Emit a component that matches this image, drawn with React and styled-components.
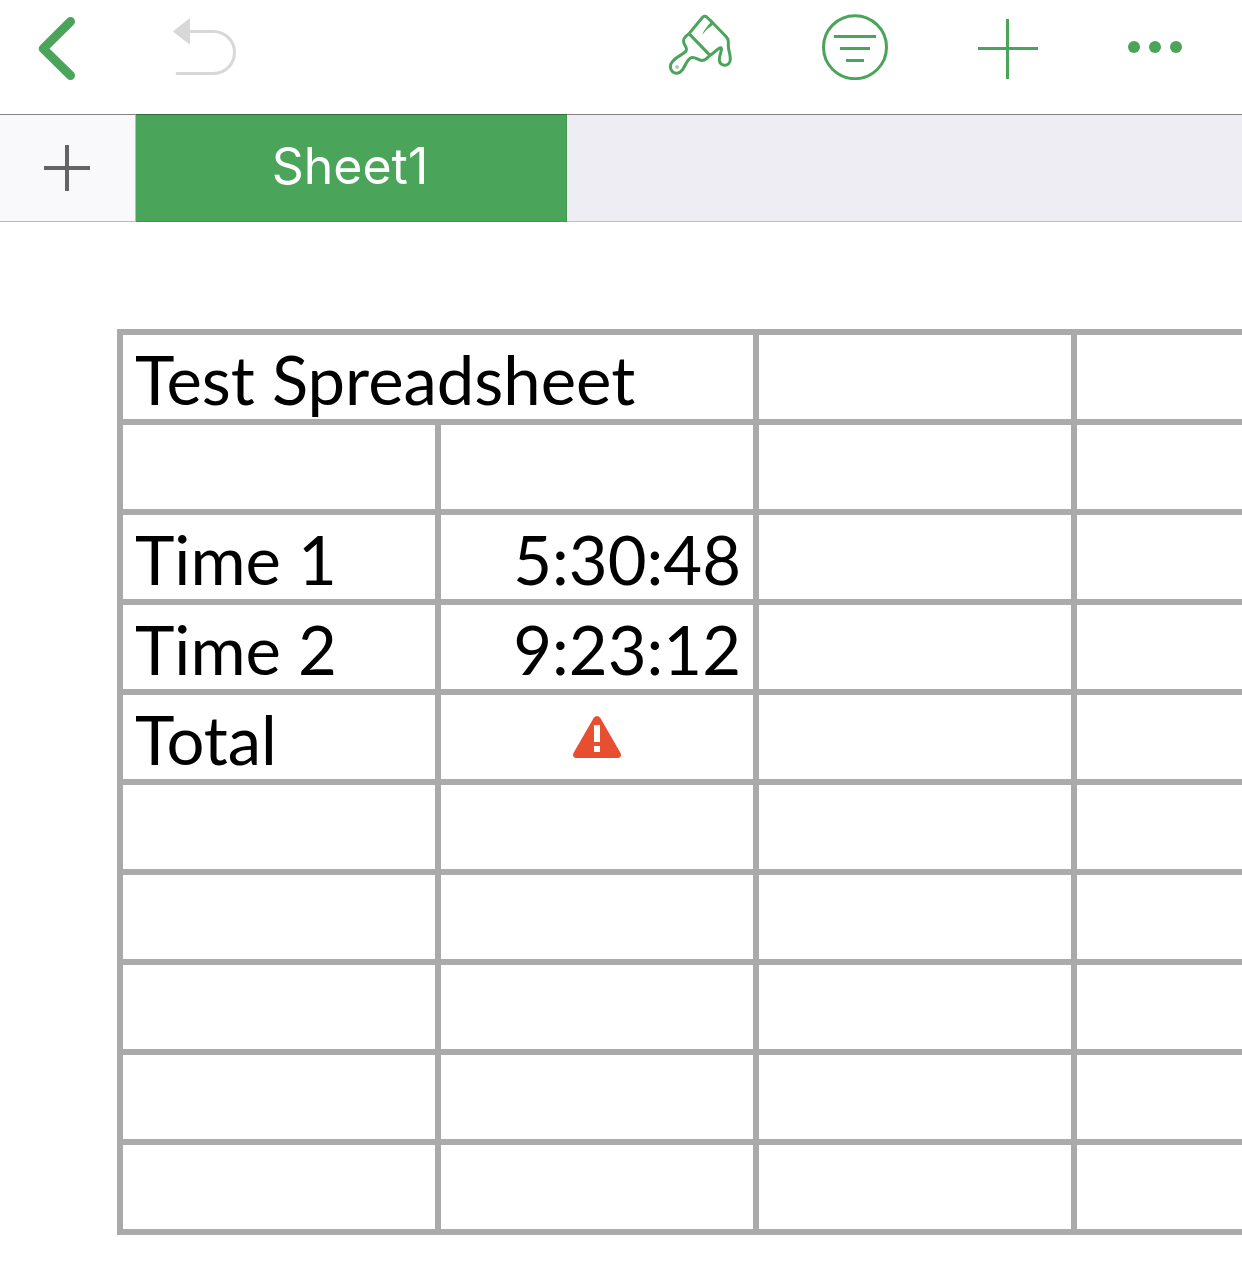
import React from "react";
import styled, { createGlobalStyle } from "styled-components";

const green = "#4aa45a";

const GlobalStyle = createGlobalStyle`
  *, *::before, *::after { box-sizing: border-box; }
  body { margin: 0; background: #fff; }
  button { margin: 0; padding: 0; border: 0; background: none; font: inherit; cursor: pointer; }
`;

const Page = styled.div`
  display: flex;
  flex-direction: column;
  min-height: 100vh;
  font-family: Inter, "Liberation Sans", sans-serif;
`;

const Toolbar = styled.header`
  display: flex;
  justify-content: space-between;
  padding: 14px 60px 34px 38px;
  color: ${green};
`;

const ToolGroup = styled.div`
  display: flex;
  gap: ${(p) => p.$gap}px;
`;

const ToolButton = styled.button`
  display: block;
  color: ${(p) => (p.disabled ? "#d8d8d8" : "inherit")};

  svg { display: block; }
`;

const TabBar = styled.nav`
  display: flex;
  height: 108px;
  background: #eeedf3;
`;

const AddSheet = styled.button`
  display: grid;
  place-items: center;
  width: 136px;
  padding-right: 2px;
  background: #f9f9fc;
  color: #646464;
  border: solid rgba(0, 0, 0, 0.25);
  border-width: 0 1px 1px 0;
  border-top: 1px solid rgba(0, 0, 0, 0.48);
`;

const SheetTab = styled.button`
  width: 431px;
  background: ${green};
  color: #fff;
  font-size: 50px;
  line-height: 60px;
  padding: 0 2px 4px 0;
  border: solid rgba(0, 0, 0, 0.08);
  border-width: 0 1px 1px 0;
  border-top: 1px solid rgba(0, 0, 0, 0.35);
`;

const TabFiller = styled.div`
  flex: 1;
  border-top: 1px solid rgba(0, 0, 0, 0.45);
  border-bottom: 1px solid rgba(0, 0, 0, 0.2);
`;

const SheetArea = styled.main`
  padding: 107px 0 30px 117px;
  overflow-x: auto;
  scrollbar-width: none;
`;

const Grid = styled.table`
  table-layout: fixed;
  width: 1278px;
  border-collapse: separate;
  border-spacing: 0;
  border: solid #aaa;
  border-width: 6px 0 0 6px;
  color: #000;
  font-family: "Trebuchet MS", Lato, "Open Sans", sans-serif;
  font-size: 67px;
  line-height: 80px;
`;

const Cell = styled.td`
  height: 90px;
  padding: 4px 12px 0;
  border: solid #aaa;
  border-width: 0 6px 6px 0;
  text-align: ${(p) => p.$align || "left"};
  white-space: nowrap;
`;

const IconCell = styled(Cell)`
  padding: 0;

  svg { display: block; margin: 0 auto; }
`;

const BackIcon = () => (
  <svg width="38" height="66" viewBox="0 0 38 66" fill="none" stroke="currentColor" strokeWidth="9" strokeLinecap="round" strokeLinejoin="round" aria-hidden="true">
    <path d="M32.5 7.5 5.2 34.6 32.5 61.5" />
  </svg>
);

const UndoIcon = () => (
  <svg width="64" height="66" viewBox="0 0 64 66" fill="none" stroke="currentColor" strokeWidth="3" strokeLinecap="round" aria-hidden="true">
    <path d="M18 17.5H41.5a21 21 0 0 1 0 42H5" />
    <path d="M.7 17.5 18 4V30.7Z" fill="currentColor" stroke="none" />
  </svg>
);

const BrushIcon = () => (
  <svg width="64" height="66" viewBox="54 42 192 198" fill="none" stroke="currentColor" strokeWidth="9" strokeLinejoin="round" aria-hidden="true">
    <path d="M117 101 156 54Q163 45 170 51L188 68 230 112Q235 117 235 126V138C235 150 241 162 241 177C241 202 208 202 208 179C208 165 219 144 212 143C204 143 196 157 180 166" />
    <path d="M117 101 180 166" />
    <path d="M117 101C100 112 98 120 102 130C106 141 113 145 108 153C100 163 80 170 68 184C48 207 77 235 97 210C107 195 111 178 124 173C137 169 146 184 159 181C168 180 173 173 180 166" />
    <path d="M183 66 191 73Q170 86 156 105Q162 89 183 66Z" fill="currentColor" stroke="none" />
    <circle cx="81" cy="201" r="6" fill="currentColor" fillOpacity="0.5" stroke="none" />
  </svg>
);

const FilterIcon = () => (
  <svg width="66" height="66" viewBox="0 0 66 66" fill="none" stroke="currentColor" strokeWidth="3" aria-hidden="true">
    <circle cx="33" cy="33.2" r="31.5" />
    <path d="M12 22.5H54M18 34.5H48M24 46.5H42" />
  </svg>
);

const PlusIcon = () => (
  <svg width="60" height="66" viewBox="0 0 60 66" stroke="currentColor" strokeWidth="3" aria-hidden="true">
    <path d="M0 34.5H60M29.5 5V65" />
  </svg>
);

const MoreIcon = () => (
  <svg width="54" height="66" viewBox="0 0 54 66" fill="currentColor" aria-hidden="true">
    <circle cx="6" cy="33" r="6" />
    <circle cx="27" cy="33" r="6" />
    <circle cx="48" cy="33" r="6" />
  </svg>
);

const AddSheetIcon = () => (
  <svg width="46" height="46" viewBox="0 0 46 46" stroke="currentColor" strokeWidth="4" aria-hidden="true">
    <path d="M0 23H46M23 0V46" />
  </svg>
);

const WarningIcon = () => (
  <svg width="48" height="42" viewBox="0 0 48 42" role="img" aria-label="Error">
    <path d="M20.8 1.8Q24-1.8 27.2 1.8L47.5 37Q49 41.2 45.5 42H2.5Q-1 41.2.5 37Z" fill="#e84f31" />
    <path d="M21 9h6v17h-6zM21 30h6v6h-6z" fill="#fff" />
  </svg>
);

const rows = [
  [{ text: "Test Spreadsheet", span: 2 }, {}, {}],
  [{}, {}, {}, {}],
  [{ text: "Time 1" }, { text: "5:30:48", align: "right" }, {}, {}],
  [{ text: "Time 2" }, { text: "9:23:12", align: "right" }, {}, {}],
  [{ text: "Total" }, { error: true }, {}, {}],
  [{}, {}, {}, {}],
  [{}, {}, {}, {}],
  [{}, {}, {}, {}],
  [{}, {}, {}, {}],
  [{}, {}, {}, {}],
];

export default function App() {
  return (
    <Page>
      <GlobalStyle />
      <Toolbar>
        <ToolGroup $gap={96}>
          <ToolButton aria-label="Back"><BackIcon /></ToolButton>
          <ToolButton aria-label="Undo" disabled><UndoIcon /></ToolButton>
        </ToolGroup>
        <ToolGroup $gap={90}>
          <ToolButton aria-label="Format"><BrushIcon /></ToolButton>
          <ToolButton aria-label="Sort and filter"><FilterIcon /></ToolButton>
          <ToolButton aria-label="Insert"><PlusIcon /></ToolButton>
          <ToolButton aria-label="More"><MoreIcon /></ToolButton>
        </ToolGroup>
      </Toolbar>
      <TabBar aria-label="Sheets">
        <AddSheet aria-label="Add sheet"><AddSheetIcon /></AddSheet>
        <SheetTab aria-current="page">Sheet1</SheetTab>
        <TabFiller />
      </TabBar>
      <SheetArea>
        <Grid>
          <tbody>
            {rows.map((cells, r) => (
              <tr key={r}>
                {cells.map((cell, c) =>
                  cell.error ? (
                    <IconCell key={c}><WarningIcon /></IconCell>
                  ) : (
                    <Cell key={c} colSpan={cell.span} $align={cell.align}>{cell.text}</Cell>
                  )
                )}
              </tr>
            ))}
          </tbody>
        </Grid>
      </SheetArea>
    </Page>
  );
}
